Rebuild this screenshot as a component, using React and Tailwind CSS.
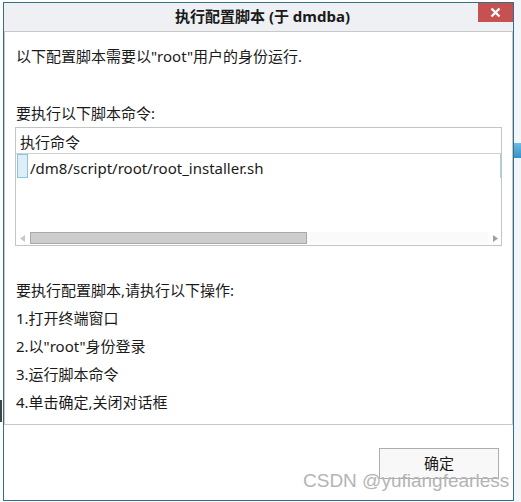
export default function App() {
  const font = { fontFamily: '"Noto Sans", "Noto Sans CJK SC", sans-serif' };
  return (
    <div className="w-[521px] h-[502px] bg-white flex relative overflow-hidden text-[#1a1a1a]" style={font}>
      {/* left background strip */}
      <div className="w-[3px] h-full bg-white flex flex-col">
        <div className="h-[400px]" />
        <div className="h-[22px] w-[2px] bg-[#444]" />
      </div>
      {/* dialog window */}
      <div className="mt-[2px] w-[511px] h-[499px] border border-[#2f6f8f] flex flex-col bg-white">
        {/* title bar */}
        <div className="h-[28px] bg-[#eef0f3] relative flex items-center justify-center pl-[8px]">
          <span className="text-[15px] font-bold leading-[20px] -mt-[2px]">执行配置脚本 (于 dmdba)</span>
          <div className="absolute right-0 top-0 w-[35px] h-[19px] bg-[#c75050] flex items-center justify-center">
            <svg width="11" height="11" viewBox="0 0 11 11">
              <path d="M1.5 1.5 L9.5 9.5 M9.5 1.5 L1.5 9.5" stroke="white" strokeWidth="2.4" />
            </svg>
          </div>
        </div>
        {/* content panel */}
        <div className="h-[394px] border border-[#c8c8c8] pt-[14px] pl-[11px] flex flex-col text-[15px]">
          <div className="h-[20px] leading-[20px]">以下配置脚本需要以"root"用户的身份运行.</div>
          <div className="h-[20px] leading-[20px] mt-[37px]">要执行以下脚本命令:</div>
          {/* list box */}
          <div className="mt-[4px] -ml-[1px] w-[487px] h-[119px] border border-[#c4c4c4] flex flex-col">
            <div className="h-[26px] border-b border-[#d0d0d0] pl-[4px] leading-[28px]">执行命令</div>
            <div className="h-[24px] flex items-start relative">
              <div className="ml-[1px] w-[11px] h-[24px] bg-[#deeef8] border border-[#8cc4e4]" />
              <span className="ml-[2px] leading-[20px] pt-[4px]">/dm8/script/root/root_installer.sh</span>
              <div className="absolute right-0 top-0 w-[1px] h-[24px] bg-[#a8d2ea]" />
            </div>
            <div className="flex-1" />
            {/* horizontal scrollbar */}
            <div className="h-[12px] mb-[1px] flex items-center bg-white">
              <div className="w-[14px] flex items-center justify-center">
                <svg width="6" height="7" viewBox="0 0 6 7"><path d="M5 0 L0 3.5 L5 7 Z" fill="#c8c8c8" /></svg>
              </div>
              <div className="w-[277px] h-[12px] bg-[#cdcdcd] border border-[#a9a9a9]" />
              <div className="w-[181px] h-[12px] bg-[#fafafa]" />
              <div className="flex-1 flex items-center justify-center">
                <svg width="6" height="7" viewBox="0 0 6 7"><path d="M1 0 L6 3.5 L1 7 Z" fill="#a0a0a0" /></svg>
              </div>
            </div>
          </div>
          <div className="mt-[30px] leading-[28px]">
            <div>要执行配置脚本,请执行以下操作:</div>
            <div>1.打开终端窗口</div>
            <div>2.以"root"身份登录</div>
            <div>3.运行脚本命令</div>
            <div>4.单击确定,关闭对话框</div>
          </div>
        </div>
        {/* bottom area */}
        <div className="flex-1 flex justify-end items-start pt-[23px] pr-[14px]">
          <div className="w-[120px] h-[31px] bg-[#f8f8f8] border border-[#adadad] flex items-center justify-center text-[15px]">
            确定
          </div>
        </div>
      </div>
      {/* right background strip */}
      <div className="flex-1 h-full bg-[#f3f6f9] flex flex-col">
        <div className="h-[143px]" />
        <div className="h-[15px] bg-gradient-to-b from-[#6bbde3] to-[#2f93c6]" />
      </div>
      {/* watermark */}
      <div
        className="absolute left-[303px] top-[469px] text-[19px] leading-[24px] text-[#b4b4b4] whitespace-nowrap"
        style={{ fontFamily: '"Liberation Sans", Arial, sans-serif' }}
      >
        CSDN @yufiangfearless
      </div>
    </div>
  );
}
